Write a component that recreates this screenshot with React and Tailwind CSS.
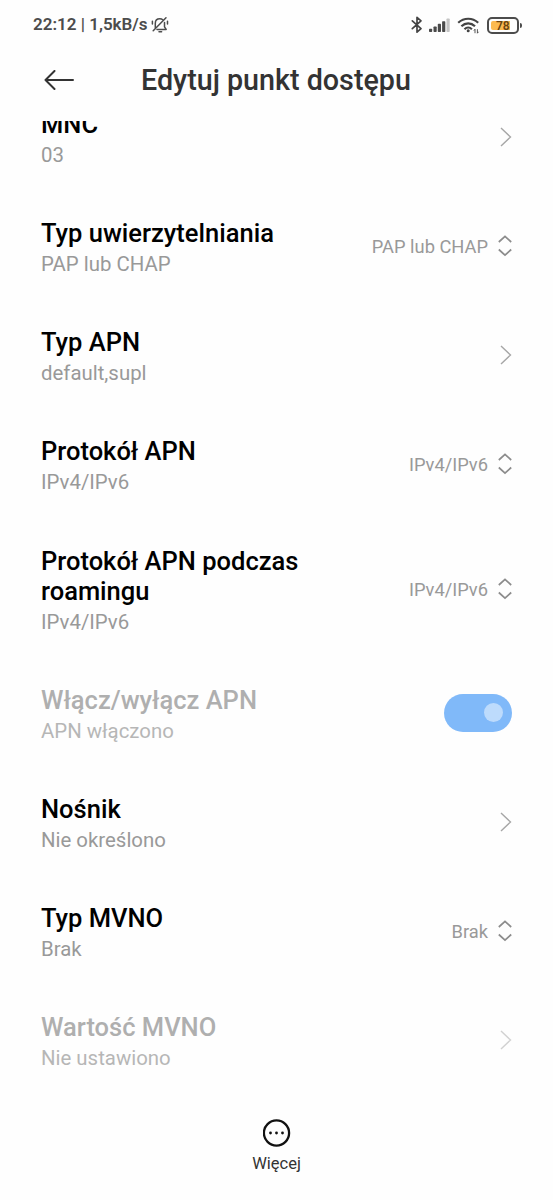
import React from 'react';

const settings = [
    { title: 'MNC', value: '03', type: 'link' },
    { title: 'Typ uwierzytelniania', value: 'PAP lub CHAP', type: 'select' },
    { title: 'Typ APN', value: 'default,supl', type: 'link' },
    { title: 'Protokół APN', value: 'IPv4/IPv6', type: 'select' },
    { title: 'Protokół APN podczas roamingu', value: 'IPv4/IPv6', type: 'select' },
    { title: 'Włącz/wyłącz APN', value: 'APN włączono', type: 'switch', disabled: true },
    { title: 'Nośnik', value: 'Nie określono', type: 'link' },
    { title: 'Typ MVNO', value: 'Brak', type: 'select' },
    { title: 'Wartość MVNO', value: 'Nie ustawiono', type: 'link', disabled: true },
];

function MutedBell() {
    return (
        <svg className="ml-[3px] h-[18px] w-[18px]" viewBox="0 0 18 18" fill="none" stroke="#4c4c4c" strokeWidth="1.5" strokeLinecap="round" strokeLinejoin="round">
            <path d="M4.3 11.4V7.2C4.3 4.5 6.2 2.7 8.8 2.7C10 2.7 11 3 11.8 3.7M13.5 6.5V10.8L15.2 13.4H6" />
            <path d="M8 15.7H10.6M2.2 14.8L15 1.8M1.4 5.2V8M16.5 5.2V8" />
        </svg>
    );
}

function StatusIcons() {
    return (
        <div className="flex items-center">
            <svg className="h-5 w-3" viewBox="0 0 12 20" fill="none" stroke="#444" strokeWidth="1.7" strokeLinejoin="round" strokeLinecap="round">
                <path d="M1.3 5.8L10 13.7L6 17.2V2.3L10 5.8L1.3 13.7" />
            </svg>
            <svg className="ml-[6px] h-5 w-[22px]" viewBox="0 0 22 20" fill="#4a4a4a">
                <rect x="0" y="13.7" width="3.2" height="3.3" rx=".7" />
                <rect x="4.5" y="11.6" width="3.2" height="5.4" rx=".7" />
                <rect x="8.8" y="8.8" width="3.2" height="8.2" rx=".7" />
                <rect x="13.1" y="6.3" width="3.2" height="10.7" rx=".7" />
                <rect x="17.5" y="3.5" width="3.2" height="13.5" rx=".7" fill="#c4c4c4" />
            </svg>
            <svg className="ml-[6px] h-5 w-[23px]" viewBox="0 0 23 20" fill="none" stroke="#444" strokeWidth="2.2">
                <path d="M1.2 7.8C7 2.4 15.4 2.4 21.2 7.8" />
                <path d="M4.4 11.3C8.4 7.4 14 7.4 18 11.3" />
                <path d="M7.5 14.2C9.8 11.9 12.6 11.9 14.9 14.2" />
                <circle cx="11.2" cy="15.7" r="1.5" fill="#444" stroke="none" />
                <path d="M18 18.2V14.2L16.9 15.6M20.4 14.2V18.2L21.5 16.8" strokeWidth=".9" />
            </svg>
            <div className="ml-[7px] flex h-[17px] w-8 rounded-[5px] border-2 border-[#4c4c4c] p-[2px]">
                <div className="flex w-[19px] items-center rounded-l-[2px] bg-[#fcba50] pl-[5px] pt-px text-[12px] font-semibold leading-none text-[#6b4510]">78</div>
            </div>
            <div className="ml-px h-[5px] w-[2px] rounded-r bg-[#4c4c4c]" />
        </div>
    );
}

function RowControl({ type, value, disabled }) {
    if (type === 'switch') {
        return (
            <div className="flex h-[38px] w-[68px] items-center justify-end rounded-full bg-[#80b9f9] pr-[9px]">
                <div className="h-[19px] w-[19px] rounded-full bg-[#bddbfc]" />
            </div>
        );
    }

    if (type === 'select') {
        return (
            <div className="-mr-px flex items-center">
                <span className="pt-0.5 text-[18.3px] leading-6 text-[#999]">{value}</span>
                <svg className="ml-[9px] h-6 w-4" viewBox="0 0 16 24" fill="none" stroke="#8c8c8c" strokeWidth="1.7">
                    <path d="M1.8 8L8 2.3L14.2 8M1.8 15.5L8 21.2L14.2 15.5" />
                </svg>
            </div>
        );
    }

    return (
        <svg className={disabled ? 'h-5 w-3 opacity-50' : 'h-5 w-3'} viewBox="0 0 12 20" fill="none" stroke="#a6a6a6" strokeWidth="1.4">
            <path d="M1 1L10.5 10L1 19" />
        </svg>
    );
}

function SettingRow({ item }) {
    return (
        <div className="flex items-center justify-between py-[24.6px] pl-[41px] pr-[41px]">
            <div className={item.disabled ? 'max-w-[300px] pt-0.5 opacity-70' : 'max-w-[300px] pt-0.5'}>
                <p className={item.disabled ? 'text-[25.5px] font-medium leading-[30px] text-[#8e8e8e]' : 'text-[25.5px] font-medium leading-[30px] text-black'}>{item.title}</p>
                <p className="mt-1 text-[20.4px] leading-6 text-[#999]">{item.value}</p>
            </div>
            <RowControl type={item.type} value={item.value} disabled={item.disabled} />
        </div>
    );
}

function App() {
    return (
        <div className="flex h-[1200px] w-[553px] flex-col overflow-hidden bg-[#fefefe] font-['Roboto',sans-serif]">
            <div className="flex h-[50px] shrink-0 items-center justify-between pl-[33px] pr-[31px]">
                <div className="flex items-center text-[17px] font-semibold text-[#4c4c4c]">
                    <span>22:12 | 1,5kB/s</span>
                    <MutedBell />
                </div>
                <StatusIcons />
            </div>

            <header className="flex h-[71px] shrink-0 items-start pl-[44px] pt-[13px]">
                <svg className="mt-[7px] h-5 w-[31px]" viewBox="0 0 31 20" fill="none" stroke="#333" strokeWidth="2" strokeLinecap="round" strokeLinejoin="round">
                    <path d="M29 10H1.5M10.5 1L1.5 10L10.5 19" />
                </svg>
                <h1 className="ml-[66px] text-[28.7px] font-medium leading-[34px] text-[#333]">Edytuj punkt dostępu</h1>
            </header>

            <main className="min-h-0 flex-1 overflow-hidden">
                {/* list is scrolled so the first row is partly under the header */}
                <div className="-mt-[38.7px]">
                    {settings.map((item) => (
                        <SettingRow key={item.title} item={item} />
                    ))}
                </div>
            </main>

            <footer className="flex h-[81px] shrink-0 flex-col items-center text-[#333]">
                <svg className="h-7 w-7" viewBox="0 0 28 28" fill="#111">
                    <circle cx="13.5" cy="14" r="12.6" fill="none" stroke="#111" strokeWidth="2.3" />
                    <circle cx="7.5" cy="14" r="1.4" />
                    <circle cx="13.5" cy="14" r="1.4" />
                    <circle cx="19.5" cy="14" r="1.4" />
                </svg>
                <span className="mt-[7px] text-[16.5px] leading-5">Więcej</span>
            </footer>
        </div>
    );
}

export default App;
